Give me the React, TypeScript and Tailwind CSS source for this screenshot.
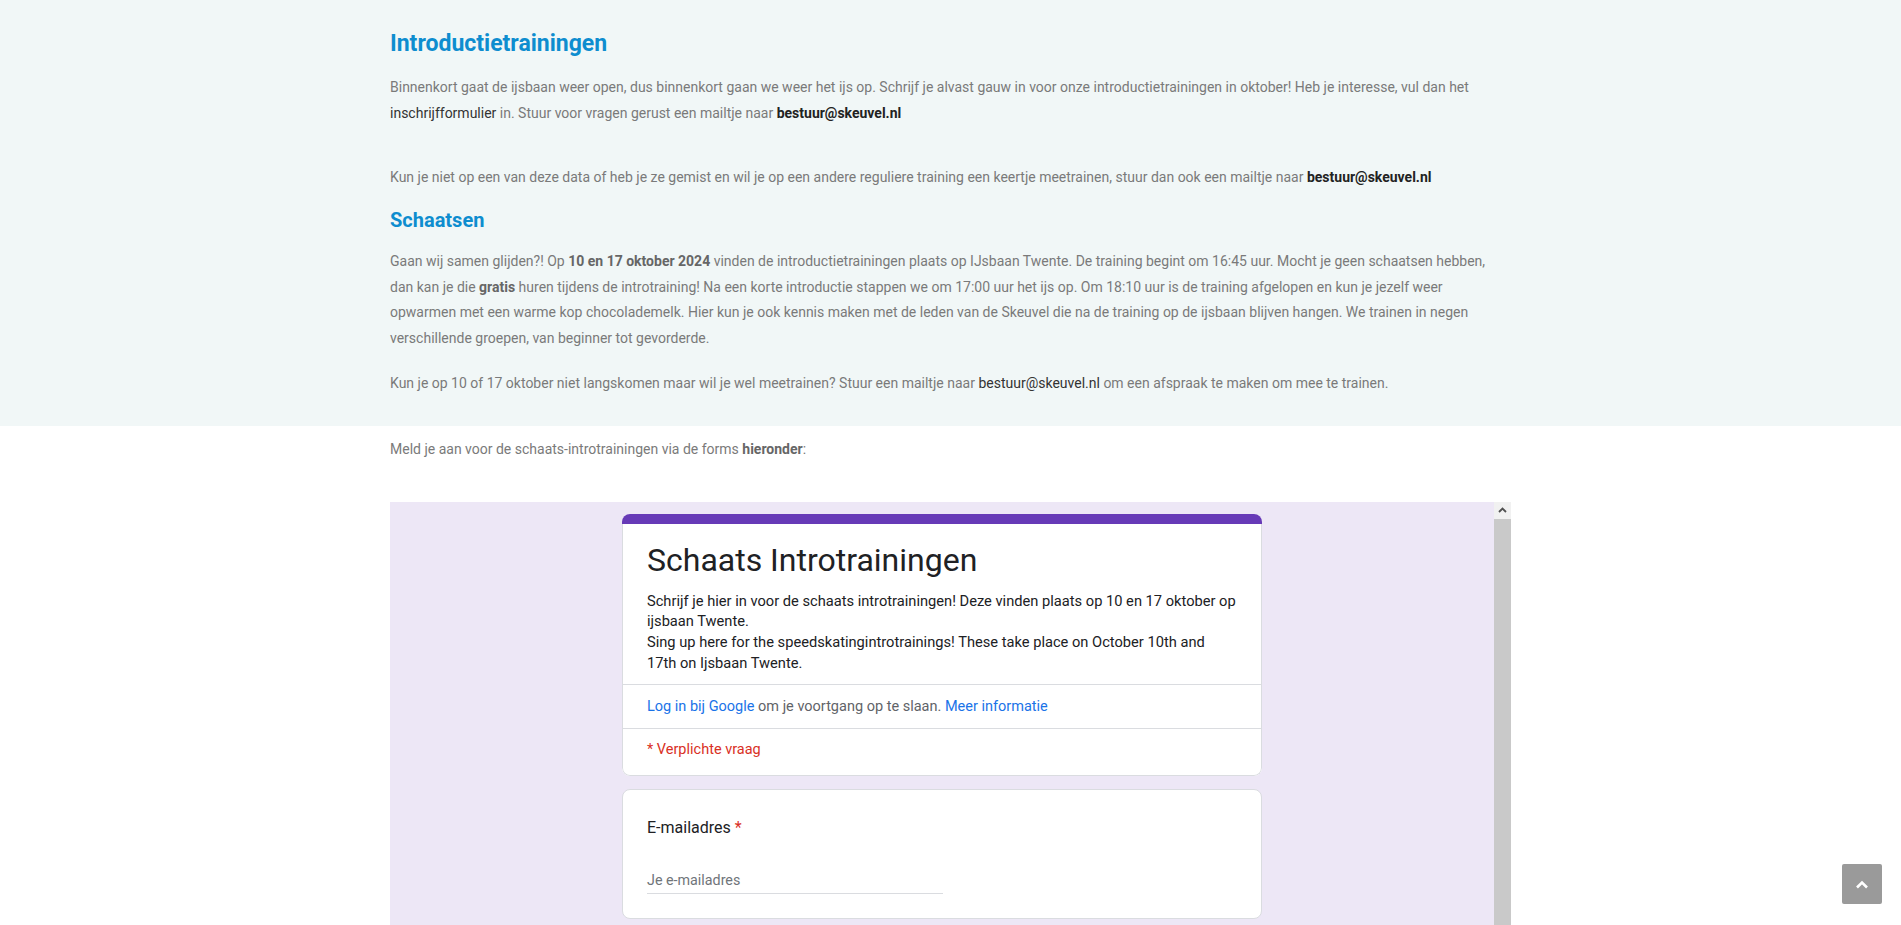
import React from "react";

export default function App() {
  return (
    <div className="relative h-[925px] overflow-hidden bg-white font-['Roboto','Liberation_Sans',sans-serif]">
      <section className="bg-[#f1f7f7]">
        <div className="mx-auto w-[1121px] pt-[29px] pb-[30px] text-[14px] leading-[25.5px] text-[#7a7a7a]">
          <h2 className="text-[23px] leading-[30px] font-bold text-[#0e8dcf]">Introductietrainingen</h2>
          <p className="mt-[16px]">
            Binnenkort gaat de ijsbaan weer open, dus binnenkort gaan we weer het ijs op. Schrijf je alvast gauw in voor onze introductietrainingen in oktober! Heb je interesse, vul dan het{" "}
            <span className="text-[#333]">inschrijfformulier</span> in. Stuur voor vragen gerust een mailtje naar{" "}
            <strong className="font-bold text-[#222]">bestuur@skeuvel.nl</strong>
          </p>
          <p className="mt-[38.5px]">
            Kun je niet op een van deze data of heb je ze gemist en wil je op een andere reguliere training een keertje meetrainen, stuur dan ook een mailtje naar{" "}
            <strong className="font-bold text-[#222]">bestuur@skeuvel.nl</strong>
          </p>
          <h3 className="mt-[17px] text-[20px] leading-[26px] font-bold text-[#0e8dcf]">Schaatsen</h3>
          <p className="mt-[16px]">
            Gaan wij samen glijden?! Op <strong className="font-bold text-[#666]">10 en 17 oktober 2024</strong> vinden de introductietrainingen plaats op IJsbaan Twente. De training begint om 16:45 uur. Mocht je geen schaatsen hebben, dan kan je die{" "}
            <strong className="font-bold text-[#666]">gratis</strong> huren tijdens de introtraining! Na een korte introductie stappen we om 17:00 uur het ijs op. Om 18:10 uur is de training afgelopen en kun je jezelf weer opwarmen met een warme kop chocolademelk. Hier kun je ook kennis maken met de leden van de Skeuvel die na de training op de ijsbaan blijven hangen. We trainen in negen verschillende groepen, van beginner tot gevorderde.
          </p>
          <p className="mt-[19.5px]">
            Kun je op 10 of 17 oktober niet langskomen maar wil je wel meetrainen? Stuur een mailtje naar{" "}
            <span className="text-[#333]">bestuur@skeuvel.nl</span> om een afspraak te maken om mee te trainen.
          </p>
        </div>
      </section>

      <div className="mx-auto w-[1121px]">
        <p className="mt-[11px] text-[14px] leading-[25.5px] text-[#7a7a7a]">
          Meld je aan voor de schaats-introtrainingen via de forms <strong className="font-bold text-[#666]">hieronder</strong>:
        </p>

        <div className="mt-[39px] flex h-[423px] bg-[#ede7f6]">
          <div className="flex flex-1 flex-col items-center overflow-hidden pt-[12px]">
            <div className="w-[640px] overflow-hidden rounded-[8px] bg-white">
              <div className="h-[10px] bg-[#673ab7]" />
              <div className="rounded-b-[8px] border-x border-b border-[#dadce0]">
                <div className="px-[24px] pt-[16px] pb-[11px]">
                  <div className="text-[32px] leading-[40px] text-[#202124]">Schaats Introtrainingen</div>
                  <div className="mt-[11px] text-[14.67px] leading-[20.7px] text-[#202124]">
                    Schrijf je hier in voor de schaats introtrainingen! Deze vinden plaats op 10 en 17 oktober op ijsbaan Twente.
                    <br />
                    Sing up here for the speedskatingintrotrainings! These take place on October 10th and 17th on Ijsbaan Twente.
                  </div>
                </div>
                <div className="flex h-[44px] items-center border-t border-[#dadce0] px-[24px] text-[14.5px] text-[#5f6368]">
                  <span className="text-[#1a73e8]">Log in bij Google</span>
                  <span>&nbsp;om je voortgang op te slaan.&nbsp;</span>
                  <span className="text-[#1a73e8]">Meer informatie</span>
                </div>
                <div className="border-t border-[#dadce0] px-[24px] pt-[11px] pb-[15px] text-[14.5px] leading-[20px] text-[#d93025]">
                  * Verplichte vraag
                </div>
              </div>
            </div>

            <div className="mt-[13px] w-[640px] rounded-[8px] border border-[#dadce0] bg-white px-[24px] pt-[25.5px] pb-[24px]">
              <div className="text-[16px] leading-[24px] text-[#202124]">
                E-mailadres <span className="text-[#d93025]">*</span>
              </div>
              <div className="mt-[30px] w-[296px] border-b border-[#dadce0] pb-[3px] text-[14.3px] leading-[20px] text-[#70757a]">
                Je e-mailadres
              </div>
            </div>
          </div>

          <div className="flex w-[17px] flex-col bg-[#f1f1f1]">
            <div className="flex h-[17px] items-center justify-center">
              <svg width="9" height="6" viewBox="0 0 9 6">
                <polyline points="1,5 4.5,1.5 8,5" fill="none" stroke="#505050" strokeWidth="1.8" />
              </svg>
            </div>
            <div className="flex-1 bg-[#c9c9c9]" />
          </div>
        </div>
      </div>

      <div className="absolute right-[19px] bottom-[21px] flex h-[40px] w-[40px] items-center justify-center rounded-[2px] bg-[#9a9a9a]">
        <svg width="14" height="9" viewBox="0 0 14 9">
          <polyline points="2,7.5 7,2.5 12,7.5" fill="none" stroke="#ffffff" strokeWidth="2.6" />
        </svg>
      </div>
    </div>
  );
}
